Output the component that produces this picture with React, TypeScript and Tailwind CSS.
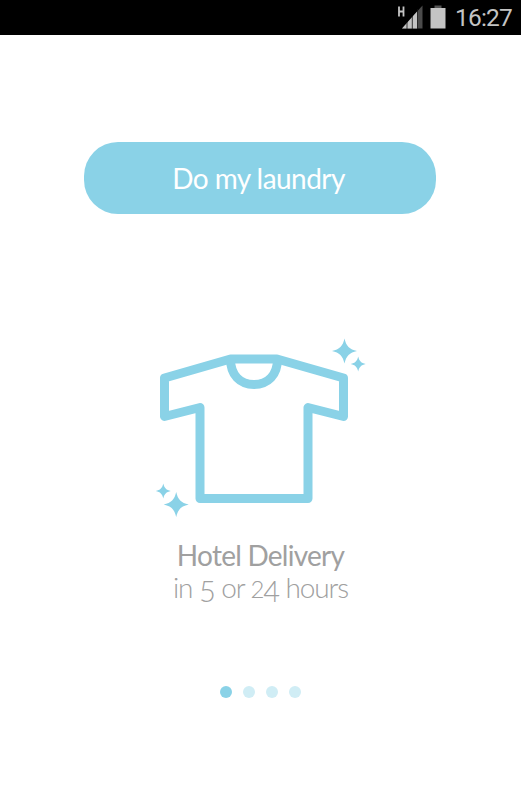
const SLIDES = ["delivery", "pricing", "tracking", "support"];

function Sparkle({ x, y, size }: { x: number; y: number; size: number }) {
  return (
    <path
      transform={`translate(${x} ${y}) scale(${size})`}
      d="M0-1C.13-.4.4-.13 1 0C.4.13.13.4 0 1C-.13.4-.4.13-1 0C-.4-.13-.13-.4 0-1Z"
      fill="currentColor"
    />
  );
}

function StatusBar() {
  return (
    <header className="flex h-[35px] shrink-0 items-center justify-end bg-black pr-[9px] text-[#c4c4c4]">
      <svg className="h-[35px] w-[50px]" viewBox="397 0 50 35">
        <path d="M399 6.500v10M403.500 6.500v10M399 11.500h4.500" stroke="currentColor" strokeWidth="1.800" fill="none" />
        <path d="M402 28.500L422.500 5.500v23Z" fill="#4b4b4b" />
        <path d="M402 28.500L417.500 11v17.500Z" fill="currentColor" />
        <path d="M407 22v7M412.300 16v13M417.500 9v20" stroke="#111" strokeWidth=".8" />
        <path d="M434.500 5.500h7v2.500h-7Z" fill="#555" />
        <path d="M430.500 8h15v20.500h-15Z" fill="currentColor" />
      </svg>
      <span className="ml-[8px] mt-[1px] w-[57px] whitespace-nowrap font-['Roboto',sans-serif] text-[24.500px] leading-[28px] tracking-[-0.8px]">
        16:27
      </span>
    </header>
  );
}

function ShirtIcon() {
  return (
    <svg className="mt-[121px] h-[185px] w-[220px] text-[#8ad2e7]" viewBox="150 335 220 185">
      <g fill="none" stroke="currentColor" strokeWidth="9" strokeLinejoin="round">
        <path d="M230.500 359H277L343.500 378V416.500L308 407.500V498.500H200V407.500L164.500 416.500V378Z" />
        <path d="M230.500 359C230.500 375 240 384.500 254 384.500S277.500 375 277.500 359" />
      </g>
      <Sparkle x={344.5} y={351} size={12.5} />
      <Sparkle x={358.2} y={364} size={7.5} />
      <Sparkle x={163.3} y={491} size={7.5} />
      <Sparkle x={176.2} y={504.5} size={12.5} />
    </svg>
  );
}

export default function App() {
  return (
    <div className="flex h-[800px] w-[521px] flex-col overflow-hidden bg-white font-['Lato',sans-serif]">
      <StatusBar />
      <main className="flex flex-1 flex-col items-center">
        <button className="mr-px mt-[107px] flex h-[72px] w-[352px] items-center justify-center rounded-[34px] bg-[#8ad2e7] pr-[3px] text-[28px] leading-[34px] tracking-[-0.550px] text-white">
          Do my laundry
        </button>

        <div className="pr-[1px]">
          <ShirtIcon />
        </div>

        <div className="mt-[19px] whitespace-nowrap text-center text-[28px] leading-[33px] text-[#a0a0a0]">
          <h1 className="h-[32px] tracking-[-0.750px]">Hotel Delivery</h1>
          {/* Old-style figures: the 5 and 4 hang below the baseline */}
          <p className="h-[34px] font-light tracking-[-1.100px]">
            in <span className="inline-block align-[-4px] text-[29px] leading-none">5</span> or{" "}
            <span className="text-[24px] leading-none">2</span>
            <span className="inline-block align-[-4px] text-[29px] leading-none">4</span> hours
          </p>
        </div>

        <nav className="mt-[81px] flex gap-[11.300px]">
          {SLIDES.map((slide, i) => (
            <span
              key={slide}
              className={`size-[12px] rounded-full ${i === 0 ? "bg-[#8ad2e7]" : "bg-[#d0edf5]"}`}
            />
          ))}
        </nav>
      </main>
    </div>
  );
}
